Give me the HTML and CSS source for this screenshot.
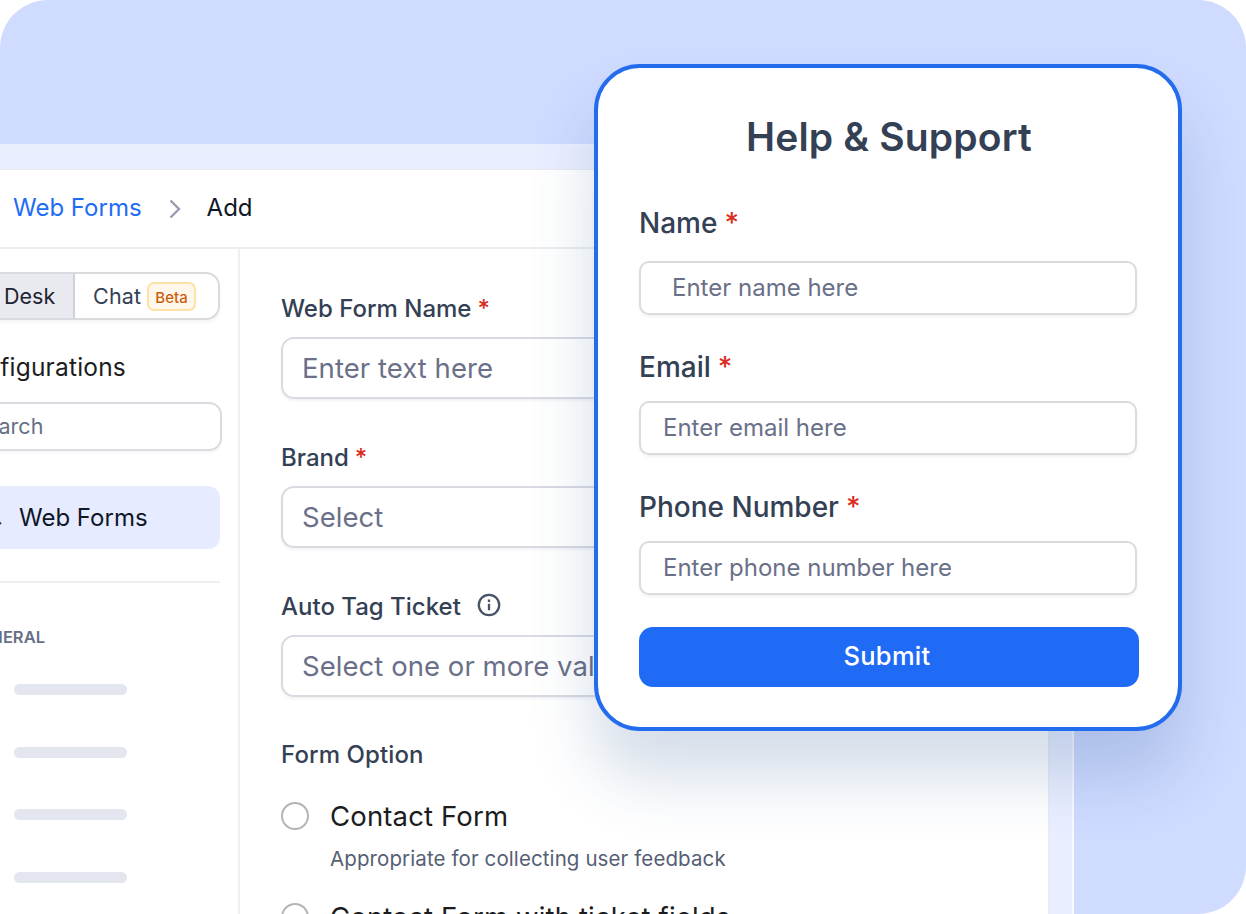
FILE: index.html
```
<!DOCTYPE html>
<html lang="en">
<head>
    <meta charset="UTF-8">
    <meta name="viewport" content="width=device-width, initial-scale=1.0">
    <title>Web Forms</title>
    <link rel="stylesheet" href="styles.css">
</head>
<body>
    <div class="stage">
        <div class="window">
            <div class="app">
                <header class="breadcrumb">
                    <a class="crumb-link">Web Forms</a>
                    <svg class="chevron" width="12" height="20" viewBox="0 0 12 20" fill="none" stroke="#9a9cb0" stroke-width="2.4">
                        <path d="M1.5 1.5 L10 10 L1.5 18.5"/>
                    </svg>
                    <span class="crumb-current">Add</span>
                </header>

                <div class="columns">
                    <aside class="sidebar">
                        <div class="tabs">
                            <div class="tab active">Desk</div>
                            <div class="tab">Chat <span class="beta">Beta</span></div>
                        </div>
                        <h2 class="side-title">Configurations</h2>
                        <div class="search">Search</div>
                        <div class="side-item">
                            <svg class="side-icon" width="22" height="22" viewBox="0 0 22 22" fill="none" stroke="#3b4252" stroke-width="2">
                                <rect x="2" y="2" width="17" height="15" rx="2"/>
                                <path d="M15 11 L21 17"/>
                            </svg>
                            Web Forms
                        </div>
                        <div class="side-group">GENERAL</div>
                        <div class="bars">
                            <div class="bar"></div>
                            <div class="bar"></div>
                            <div class="bar"></div>
                            <div class="bar"></div>
                        </div>
                    </aside>

                    <main class="form">
                        <label class="label">Web Form Name <span class="req">*</span></label>
                        <div class="input">Enter text here</div>
                        <label class="label">Brand <span class="req">*</span></label>
                        <div class="input">Select</div>
                        <label class="label">Auto Tag Ticket
                            <svg class="info" width="24" height="24" viewBox="0 0 24 24" fill="none" stroke="#475467" stroke-width="2.3">
                                <circle cx="12" cy="12" r="10.2"/>
                                <path d="M12 10.8 V17.2 M12 6.6 V9"/>
                            </svg>
                        </label>
                        <div class="input">Select one or more values</div>
                        <label class="label group">Form Option</label>
                        <div class="option">
                            <span class="radio"></span>
                            <div>
                                <div class="option-name">Contact Form</div>
                                <div class="option-text">Appropriate for collecting user feedback</div>
                            </div>
                        </div>
                        <div class="option">
                            <span class="radio"></span>
                            <div class="option-name">Contact Form with ticket fields</div>
                        </div>
                    </main>
                </div>
            </div>
        </div>

        <div class="card">
            <h1 class="card-title">Help &amp; Support</h1>
            <label class="card-label first">Name <span class="req">*</span></label>
            <div class="card-input wide">Enter name here</div>
            <label class="card-label">Email <span class="req">*</span></label>
            <div class="card-input">Enter email here</div>
            <label class="card-label">Phone Number <span class="req">*</span></label>
            <div class="card-input">Enter phone number here</div>
            <button class="submit">Submit</button>
        </div>
    </div>
</body>
</html>
```
FILE: styles.css
```
* {
    box-sizing: border-box;
}
body {
    margin: 0;
    background: #fff;
    font-family: Inter, "Liberation Sans", sans-serif;
    overflow: hidden;
}
.stage {
    position: relative;
    width: 1246px;
    height: 914px;
    padding-top: 144px;
    background: #cfdbff;
    border-radius: 48px 48px 48px 0;
    overflow: hidden;
}
/* the window runs off the left edge of the stage */
.window {
    width: 1134px;
    height: 790px;
    margin-left: -60px;
    padding: 24px 23px 0 0;
    background: #eaefff;
    border-top: 1px solid #edf1fd;
    border-right: 2px solid #f8faff;
}
.app {
    height: 100%;
    background: #fff;
    border-top: 1px solid #e9ebf0;
    border-right: 1px solid #e9ebf0;
}
.breadcrumb {
    display: flex;
    align-items: center;
    height: 79px;
    padding: 0 0 2px 73px;
    border-bottom: 2px solid #ecedf0;
    font-size: 24px;
}
.crumb-link {
    color: #1f6cf5;
}
.chevron {
    margin: 3px 26px 0 27px;
}
.crumb-current {
    color: #101828;
}
.columns {
    display: flex;
}
.sidebar {
    width: 300px;
    height: 680px;
    padding-top: 23px;
    border-right: 2px solid #eff0f3;
}
.tabs {
    display: flex;
    width: 280px;
    height: 48px;
    border: 2px solid #d9dbdf;
    border-radius: 14px;
    overflow: hidden;
    box-shadow: 0 3px 3px rgba(16, 24, 40, 0.04);
}
.tab {
    display: flex;
    align-items: center;
    padding-left: 18px;
    font-size: 21.5px;
    letter-spacing: 0.2px;
    color: #344054;
}
.tab.active {
    width: 133px;
    padding-left: 62px;
    flex-shrink: 0;
    background: #e9eaef;
    border-right: 2px solid #d0d1d9;
    letter-spacing: 0;
    color: #1d2433;
}
.beta {
    height: 29px;
    margin-left: 6px;
    padding: 1px 6px 0;
    border: 2px solid #fee2a5;
    border-radius: 7px;
    background: #fff7ea;
    color: #cb5d0c;
    font-size: 15px;
    font-weight: 500;
    line-height: 26px;
    letter-spacing: 0;
}
.side-title {
    width: 186px;
    margin: 32px 0 0;
    font-size: 24.5px;
    font-weight: 400;
    line-height: 30px;
    letter-spacing: 0.2px;
    text-align: right;
    color: #1c1c1e;
}
.search {
    width: 282px;
    height: 49px;
    margin-top: 20px;
    padding-left: 30px;
    border: 2px solid #d9dbe1;
    border-radius: 13px;
    box-shadow: 0 2px 3px rgba(16, 24, 40, 0.04);
    font-size: 21.5px;
    line-height: 44px;
    color: #667085;
}
.side-item {
    display: flex;
    align-items: center;
    gap: 17px;
    width: 280px;
    height: 63px;
    margin-top: 35px;
    padding-left: 40px;
    border-radius: 12px;
    background: #e6ebff;
    font-size: 24px;
    color: #101828;
}
.side-group {
    width: 280px;
    margin-top: 32px;
    padding-top: 42px;
    border-top: 2px solid #eeeff2;
    padding-left: 28px;
    font-size: 16.5px;
    font-weight: 600;
    line-height: 24px;
    color: #667085;
}
.bars {
    display: flex;
    flex-direction: column;
    gap: 51.6px;
    padding: 35px 0 0 74px;
}
.bar {
    width: 113px;
    height: 11px;
    border-radius: 6px;
    background: #e4e6ef;
}
.form {
    flex: 1;
    padding: 44px 0 0 41px;
}
.label {
    display: flex;
    align-items: center;
    height: 30px;
    margin-bottom: 14px;
    font-size: 24px;
    font-weight: 500;
    color: #344054;
}
.label.group {
    margin-top: -1px;
    letter-spacing: 0.1px;
}
.req {
    margin-left: 7px;
    color: #d92d20;
}
.label .req {
    margin-left: 6px;
}
.info {
    margin: -3px 0 0 16px;
}
.input {
    height: 62px;
    margin: 0 40px 43px 0;
    padding-left: 19px;
    border: 2px solid #d9dae2;
    border-radius: 13px;
    box-shadow: 0 2px 3px rgba(16, 24, 40, 0.05);
    font-size: 27.5px;
    line-height: 59px;
    letter-spacing: 0.05px;
    color: #6a7088;
}
.option {
    display: flex;
    gap: 21px;
    height: 100.6px;
    padding-top: 19px;
}
.radio {
    width: 28px;
    height: 28px;
    border: 2px solid #b4b4b7;
    border-radius: 50%;
}
.option-name {
    margin-top: -2px;
    font-size: 27.5px;
    line-height: 32px;
    letter-spacing: 0.15px;
    color: #1c1c1e;
}
.option-text {
    margin-top: 14px;
    font-size: 20.5px;
    line-height: 26px;
    letter-spacing: 0.1px;
    color: #556074;
}
.card {
    position: absolute;
    top: 64px;
    left: 594px;
    width: 588px;
    height: 667px;
    padding: 45px 39px 0 41px;
    background: #fff;
    border: 4px solid #236cee;
    border-radius: 46px;
    box-shadow: 0 46px 64px rgba(25, 75, 137, 0.19);
}
.card-title {
    margin: 0;
    font-size: 39px;
    font-weight: 600;
    line-height: 48px;
    letter-spacing: 0.15px;
    text-align: center;
    color: #344054;
}
.card-label {
    display: flex;
    align-items: center;
    height: 34px;
    margin: 35px 0 17px;
    font-size: 28px;
    font-weight: 500;
    color: #344054;
}
.card-label.first {
    margin: 45px 0 21px;
}
.card-input {
    height: 54px;
    margin-right: 2px;
    padding-left: 22px;
    border: 2px solid #d9dbdf;
    border-radius: 10px;
    box-shadow: 0 2px 3px rgba(16, 24, 40, 0.05);
    font-size: 24px;
    line-height: 50px;
    color: #6a7088;
}
.card-input.wide {
    padding-left: 31px;
}
.submit {
    display: block;
    width: 500px;
    height: 60px;
    margin-top: 32px;
    padding: 0 4px 4px 0;
    border: none;
    border-radius: 14px;
    background: #206bf6;
    color: #fff;
    font-family: inherit;
    font-size: 25.5px;
    font-weight: 500;
    letter-spacing: 0.3px;
}
```
